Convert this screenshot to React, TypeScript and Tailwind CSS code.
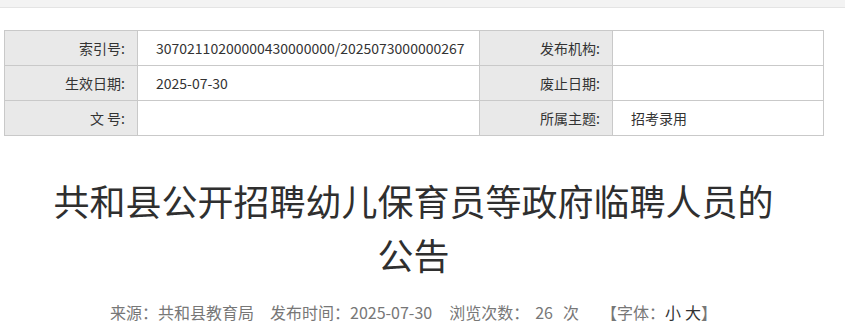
const rows = [
  ["索引号:", "30702110200000430000000/2025073000000267", "发布机构:", ""],
  ["生效日期:", "2025-07-30", "废止日期:", ""],
  ["文 号:", "", "所属主题:", "招考录用"],
]

export default function App() {
  return (
    <div className="min-h-[332px] bg-white text-[#333] [font-family:'Noto_Sans_CJK_SC','Microsoft_YaHei',sans-serif]">
      <div className="h-[8px] border-b border-[#e4e4e4] bg-[#f3f3f3]" />

      <div className="ml-[4px] w-[819px]">
        {/* Info table */}
        <table className="mt-[22px] w-full table-fixed border-collapse text-[14px]">
          <colgroup>
            <col className="w-[133px]" />
            <col className="w-[342px]" />
            <col className="w-[133px]" />
            <col className="w-[211px]" />
          </colgroup>
          <tbody>
            {rows.map((r, i) => (
              <tr key={i} className="h-[35px]">
                <td className="border border-[#c9c9c9] bg-[#e9e9e9] pr-[12px] text-right whitespace-pre">{r[0]}</td>
                <td className="border border-[#c9c9c9] pl-[18px]">{r[1]}</td>
                <td className="border border-[#c9c9c9] bg-[#e9e9e9] pr-[12px] text-right">{r[2]}</td>
                <td className="border border-[#c9c9c9] pl-[18px]">{r[3]}</td>
              </tr>
            ))}
          </tbody>
        </table>

        {/* Title */}
        <h1 className="mx-auto mt-[37px] w-[730px] text-center text-[36px] leading-[54px] text-[#2f2f2f]">
          共和县公开招聘幼儿保育员等政府临聘人员的公告
        </h1>

        {/* Meta */}
        <p className="mt-[19px] flex justify-center text-[16px] leading-[24px] text-[#777]">
          <span>来源：共和县教育局</span>
          <span className="ml-[16px]">发布时间：2025-07-30</span>
          <span className="ml-[17px]">浏览次数：</span>
          <span className="ml-[6px]">26</span>
          <span className="ml-[10px]">次</span>
          <span className="ml-[22px] flex">
            <span>【字体：</span>
            <span className="text-[#333]">小</span>
            <span className="ml-[4px] text-[#333]">大</span>
            <span>】</span>
          </span>
        </p>
      </div>
    </div>
  )
}
